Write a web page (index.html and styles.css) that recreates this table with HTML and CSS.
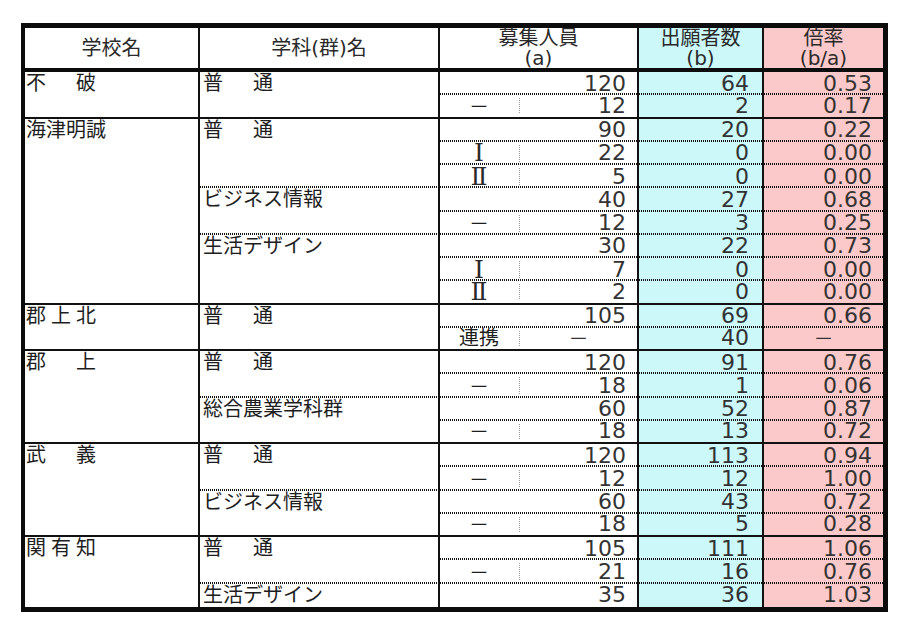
FILE: index.html
```html
<!DOCTYPE html>
<html lang="ja">
<head>
<meta charset="utf-8">
<title>出願状況</title>
<link rel="stylesheet" href="styles.css">
</head>
<body>
<div class="page">
  <div class="sheet">
    <div class="hd vr">学校名</div>
    <div class="hd vr">学科(群)名</div>
    <div class="hd vr wide"><span>募集人員</span><span>(a)</span></div>
    <div class="hd vr blue"><span>出願者数</span><span>(b)</span></div>
    <div class="hd pink"><span>倍率</span><span>(b/a)</span></div>

    <!-- 不破 -->
    <div class="sch s span2 ls30">不破</div>
    <div class="sub s span2 ls30">普通</div>
    <div class="lb d"></div><div class="n d">120</div><div class="ap d">64</div><div class="rt d">0.53</div>
    <div class="lb v s"><span class="cj">－</span></div><div class="n s">12</div><div class="ap s">2</div><div class="rt s">0.17</div>

    <!-- 海津明誠 -->
    <div class="sch s span8">海津明誠</div>
    <div class="sub d span3 ls30">普通</div>
    <div class="lb d"></div><div class="n d">90</div><div class="ap d">20</div><div class="rt d">0.22</div>
    <div class="lb v d"><span class="rn">Ⅰ</span></div><div class="n d">22</div><div class="ap d">0</div><div class="rt d">0.00</div>
    <div class="lb v d"><span class="rn">Ⅱ</span></div><div class="n d">5</div><div class="ap d">0</div><div class="rt d">0.00</div>
    <div class="sub d span2">ビジネス情報</div>
    <div class="lb d"></div><div class="n d">40</div><div class="ap d">27</div><div class="rt d">0.68</div>
    <div class="lb v d"><span class="cj">－</span></div><div class="n d">12</div><div class="ap d">3</div><div class="rt d">0.25</div>
    <div class="sub s span3">生活デザイン</div>
    <div class="lb d"></div><div class="n d">30</div><div class="ap d">22</div><div class="rt d">0.73</div>
    <div class="lb v d"><span class="rn">Ⅰ</span></div><div class="n d">7</div><div class="ap d">0</div><div class="rt d">0.00</div>
    <div class="lb v s"><span class="rn">Ⅱ</span></div><div class="n s">2</div><div class="ap s">0</div><div class="rt s">0.00</div>

    <!-- 郡上北 -->
    <div class="sch s span2 ls5">郡上北</div>
    <div class="sub s span2 ls30">普通</div>
    <div class="lb d"></div><div class="n d">105</div><div class="ap d">69</div><div class="rt d">0.66</div>
    <div class="lb v s">連携</div><div class="n s ctr"><span class="cj">－</span></div><div class="ap s">40</div><div class="rt s ctr"><span class="cj">－</span></div>

    <!-- 郡上 -->
    <div class="sch s span4 ls30">郡上</div>
    <div class="sub d span2 ls30">普通</div>
    <div class="lb d"></div><div class="n d">120</div><div class="ap d">91</div><div class="rt d">0.76</div>
    <div class="lb v d"><span class="cj">－</span></div><div class="n d">18</div><div class="ap d">1</div><div class="rt d">0.06</div>
    <div class="sub s span2">総合農業学科群</div>
    <div class="lb d"></div><div class="n d">60</div><div class="ap d">52</div><div class="rt d">0.87</div>
    <div class="lb v s"><span class="cj">－</span></div><div class="n s">18</div><div class="ap s">13</div><div class="rt s">0.72</div>

    <!-- 武義 -->
    <div class="sch s span4 ls30">武義</div>
    <div class="sub d span2 ls30">普通</div>
    <div class="lb d"></div><div class="n d">120</div><div class="ap d">113</div><div class="rt d">0.94</div>
    <div class="lb v d"><span class="cj">－</span></div><div class="n d">12</div><div class="ap d">12</div><div class="rt d">1.00</div>
    <div class="sub s span2">ビジネス情報</div>
    <div class="lb d"></div><div class="n d">60</div><div class="ap d">43</div><div class="rt d">0.72</div>
    <div class="lb v s"><span class="cj">－</span></div><div class="n s">18</div><div class="ap s">5</div><div class="rt s">0.28</div>

    <!-- 関有知 -->
    <div class="sch span3 ls5">関有知</div>
    <div class="sub d span2 ls30">普通</div>
    <div class="lb d"></div><div class="n d">105</div><div class="ap d">111</div><div class="rt d">1.06</div>
    <div class="lb v d"><span class="cj">－</span></div><div class="n d">21</div><div class="ap d">16</div><div class="rt d">0.76</div>
    <div class="sub">生活デザイン</div>
    <div class="lb"></div><div class="n">35</div><div class="ap">36</div><div class="rt">1.03</div>
  </div>
</div>
</body>
</html>
```

FILE: styles.css
```css
html, body {
  margin: 0;
  padding: 0;
  background: #ffffff;
}

body {
  color: #1e1e1e;
  font-family: "DejaVu Sans", "Noto Sans CJK JP", sans-serif;
  font-size: 20px;
}

.page {
  padding: 23px 0 0 21px;
}

.sheet {
  display: grid;
  width: 858px;
  grid-template-columns: 175px 240px 80px 119px 125px 119px;
  grid-template-rows: 44px repeat(23, 23.26px);
  border-style: solid;
  border-color: #0c0c0c;
  border-width: 5px 5px 5px 4px;
}

.sheet > div {
  box-sizing: border-box;
  display: flex;
  align-items: center;
  min-width: 0;
  line-height: 1;
  white-space: nowrap;
  background-image: var(--hl, none), var(--vl, none);
  background-size: 100% 2px, 1px calc(100% - 6px);
  background-position: 0 100%, 100% 3px;
  background-repeat: no-repeat;
}

/* header */
.hd {
  flex-direction: column;
  justify-content: center;
  line-height: 20px !important;
  border-bottom: 4px solid #0c0c0c;
  color: #2a2a2a;
}
.hd.wide { grid-column: span 2; }
.vr { border-right: 2px solid #111; }
.blue { background-color: #ccf8fa; }
.pink { background-color: #fbc9c9; }

/* columns */
.sch {
  align-items: flex-start !important;
  line-height: 23.26px !important;
  padding-left: 1px;
  border-right: 2px solid #111;
}
.sub {
  align-items: flex-start !important;
  line-height: 23.26px !important;
  padding-left: 3px;
  border-right: 2px solid #111;
}
.lb {
  justify-content: center;
  padding-right: 2px;
}
.n,
.ap,
.rt {
  justify-content: flex-end;
  font-size: 22px;
  color: #333333;
}
.n {
  padding-right: 11px;
  border-right: 2px solid #111;
}
.ap {
  padding-right: 13px;
  border-right: 2px solid #111;
  background-color: #ccf8fa;
}
.rt {
  padding-right: 11px;
  background-color: #fbc9c9;
}
.ctr {
  justify-content: center !important;
  padding-right: 0 !important;
}

/* spans */
.span2 { grid-row: span 2; }
.span3 { grid-row: span 3; }
.span4 { grid-row: span 4; }
.span8 { grid-row: span 8; }

/* spacing of names */
.ls30 { letter-spacing: 30px; }
.ls5 { letter-spacing: 5px; }

/* lines */
.s { border-bottom: 2px solid #111; }
.d { --hl: repeating-linear-gradient(90deg, #111 0 1px, transparent 1px 2px); }
.v { --vl: repeating-linear-gradient(180deg, #9a9a9a 0 1px, transparent 1px 2px); }

.cj {
  font-family: "Noto Sans CJK JP", sans-serif;
  font-size: 20px;
  line-height: 20px;
}
.rn {
  font-family: "DejaVu Serif", "Liberation Serif", serif;
  font-size: 25px;
  line-height: 20px;
  color: #2a2a2a;
}
```
